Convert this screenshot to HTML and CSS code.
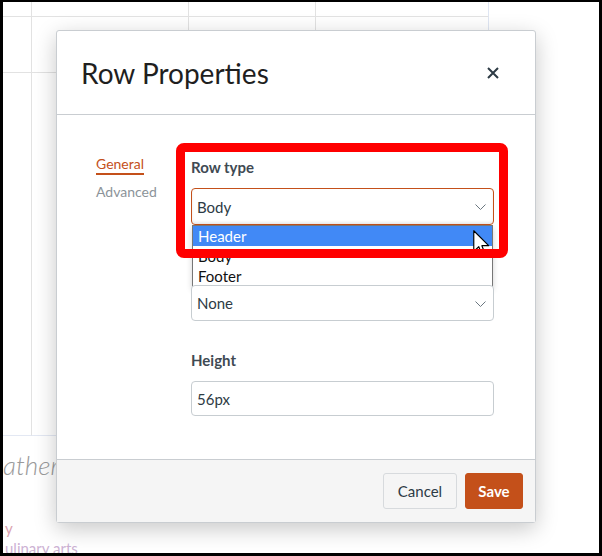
FILE: index.html
```html
<!DOCTYPE html>
<html lang="en">
  <head>
    <meta charset="UTF-8" />
    <title>Row Properties</title>
    <link rel="stylesheet" href="styles.css">
  </head>
  <body>
    <div class="frame">
      <!-- page behind the dialog -->
      <div class="sheet">
        <div class="grid">
          <div class="cell"></div><div class="cell"></div><div class="cell"></div><div class="cell cell-last"></div>
          <div class="cell"></div><div class="cell"></div><div class="cell"></div><div class="cell cell-last"></div>
          <div class="cell cell-bottom"></div><div class="cell cell-bottom"></div><div class="cell cell-bottom"></div><div class="cell cell-bottom cell-last"></div>
        </div>
        <div class="sheet-notes">
          <p class="sheet-title">ather</p>
          <p class="sheet-link">y</p>
          <p class="sheet-link sheet-link-alt">ulinary arts</p>
        </div>
      </div>

      <div class="modal">
        <div class="modal-header">
          <h2>Row Properties</h2>
          <svg class="modal-close" width="12" height="12" viewBox="0 0 12 12">
            <path d="M1 1 L11 11 M11 1 L1 11" stroke="#2d3b45" stroke-width="2" fill="none"/>
          </svg>
        </div>
        <div class="modal-body">
          <ul class="tabs">
            <li class="tab active">General</li>
            <li class="tab">Advanced</li>
          </ul>
          <div class="fields">
            <div class="field">
              <label>Row type</label>
              <div class="select focused">
                <span>Body</span>
                <svg class="chevron" width="11" height="6" viewBox="0 0 11 6"><polyline points="0.5,0.5 5.5,5.5 10.5,0.5" fill="none" stroke="#6b7780" stroke-width="1"/></svg>
              </div>
              <ul class="dropdown">
                <li class="option selected">Header</li>
                <li class="option">Body</li>
                <li class="option">Footer</li>
              </ul>
            </div>
            <div class="field">
              <!-- label is covered by the open list -->
              <div class="label-space"></div>
              <div class="select select-short">
                <span>None</span>
                <svg class="chevron" width="11" height="6" viewBox="0 0 11 6"><polyline points="0.5,0.5 5.5,5.5 10.5,0.5" fill="none" stroke="#6b7780" stroke-width="1"/></svg>
              </div>
            </div>
            <div class="field field-last">
              <label>Height</label>
              <div class="input">56px</div>
            </div>
          </div>
        </div>
        <div class="modal-footer">
          <button class="btn btn-cancel">Cancel</button>
          <button class="btn btn-save">Save</button>
        </div>
      </div>

      <svg class="cursor" width="18" height="27" viewBox="0 0 14 21">
        <path d="M0.6 0.6 L0.6 16.6 L4.5 13 L7.2 19.6 L9.5 18.6 L6.9 12.2 L12.2 12.2 Z" fill="#fff" stroke="#000" stroke-width="0.9" stroke-linejoin="round"/>
      </svg>
      <div class="callout"></div>
    </div>
  </body>
</html>
```

FILE: styles.css
```css
body {
  margin: 0;
  background-color: #000;
  font-family: "Lato", "Liberation Sans", sans-serif;
}

/* Outer frame of the screenshot */
.frame {
  position: relative;
  width: 602px;
  height: 556px;
  box-sizing: border-box;
  border-style: solid;
  border-color: #000;
  border-width: 2px 3px 3px 3px;
  background-color: #fff;
  overflow: hidden;
}

/* Background sheet */
.sheet {
  width: 486px;
}

.grid {
  display: grid;
  grid-template-columns: 29px 157px 127px 173px;
  grid-template-rows: 15px 56px 363px;
}

.cell {
  border-right: 1px solid #e2e2e2;
  border-bottom: 1px solid #e2e2e2;
}

.cell-last {
  border-right-color: #dfe6f3;
}

.cell-bottom {
  border-bottom-color: #e3e8f3;
}

.sheet-notes {
  padding-top: 14px;
}

.sheet-notes p {
  margin: 0;
}

.sheet-title {
  font-size: 26px;
  font-style: italic;
  font-weight: 300;
  color: #9a9a9a;
  line-height: 30px;
  height: 68px;
}

.sheet-link {
  font-size: 15px;
  color: #dba3b0;
  line-height: 20px;
  padding-left: 2px;
}

.sheet-link-alt {
  color: #cdb2d4;
  margin-left: -2px;
}

/* Dialog */
.modal {
  position: absolute;
  left: 53px;
  top: 28px;
  width: 478px;
  background-color: #fff;
  border: 1px solid #c9cdd1;
  border-radius: 3px;
  box-shadow: 0 6px 22px rgba(0, 0, 0, 0.22);
}

.modal-header {
  height: 83px;
  display: flex;
  align-items: center;
  justify-content: space-between;
  padding: 0 36px 0 24px;
  border-bottom: 1px solid #c9cdd1;
}

.modal-header h2 {
  margin: 0;
  font-size: 28px;
  font-weight: 400;
  color: #1f1f1f;
}

.modal-close {
  display: block;
}

.modal-body {
  display: flex;
  padding: 42px 41px 43px 39px;
}

.tabs {
  list-style: none;
  margin: -4px 0 0;
  padding: 0;
  width: 95px;
  flex-shrink: 0;
}

.tab {
  font-size: 14px;
  color: #8b9399;
  line-height: 17px;
  margin-bottom: 8px;
}

.tab.active {
  color: #c4501a;
  display: inline-block;
  border-bottom: 2px solid #c4501a;
  padding-bottom: 1px;
}

.fields {
  flex: 1;
}

.field {
  position: relative;
  margin-bottom: 29px;
}

.field-last {
  margin-bottom: 0;
}

.field label {
  display: block;
  font-size: 15px;
  font-weight: 700;
  color: #3f4a53;
  line-height: 20px;
  margin-bottom: 11px;
}

.label-space {
  height: 20px;
  margin-bottom: 11px;
}

.select,
.input {
  display: flex;
  align-items: center;
  justify-content: space-between;
  height: 37px;
  box-sizing: border-box;
  padding: 0 7px 0 5px;
  border: 1px solid #c7cdd1;
  border-radius: 4px;
  font-size: 15px;
  color: #2d3b45;
  background-color: #fff;
}

.select-short {
  height: 36px;
}

.input {
  height: 35px;
}

.select.focused {
  border-color: #c4501a;
  box-shadow: inset 0 -2px 3px rgba(0, 0, 0, 0.08);
}

.chevron {
  margin-top: 1px;
}

/* Open select list */
.dropdown {
  position: absolute;
  top: 68px;
  left: 1px;
  right: 1px;
  margin: 0;
  padding: 0;
  list-style: none;
  background-color: #fff;
  border: 1px solid #767676;
  box-shadow: 0 3px 6px rgba(0, 0, 0, 0.18);
}

.option {
  height: 20px;
  line-height: 20px;
  padding-left: 5px;
  font-size: 15px;
  color: #111;
}

.option.selected {
  background-color: #4189f6;
  color: #fff;
}

/* Footer */
.modal-footer {
  display: flex;
  justify-content: flex-end;
  gap: 8px;
  padding: 13px 12px 13px;
  background-color: #f5f5f5;
  border-top: 1px solid #c9cdd1;
}

.btn {
  height: 36px;
  font-family: "Lato", "Liberation Sans", sans-serif;
  font-size: 15px;
  border-radius: 3px;
  cursor: pointer;
}

.btn-cancel {
  width: 74px;
  background-color: #f5f5f5;
  border: 1px solid #d7dadd;
  color: #2d3b45;
}

.btn-save {
  width: 58px;
  background-color: #c4501a;
  border: 1px solid #c4501a;
  color: #fff;
  font-weight: 700;
}

/* Annotation layered over the screenshot */
.cursor {
  position: absolute;
  left: 470px;
  top: 228px;
}

.callout {
  position: absolute;
  left: 173px;
  top: 141px;
  width: 332px;
  height: 115px;
  box-sizing: border-box;
  border: 9px solid #ff0000;
  border-radius: 8px;
}
```
